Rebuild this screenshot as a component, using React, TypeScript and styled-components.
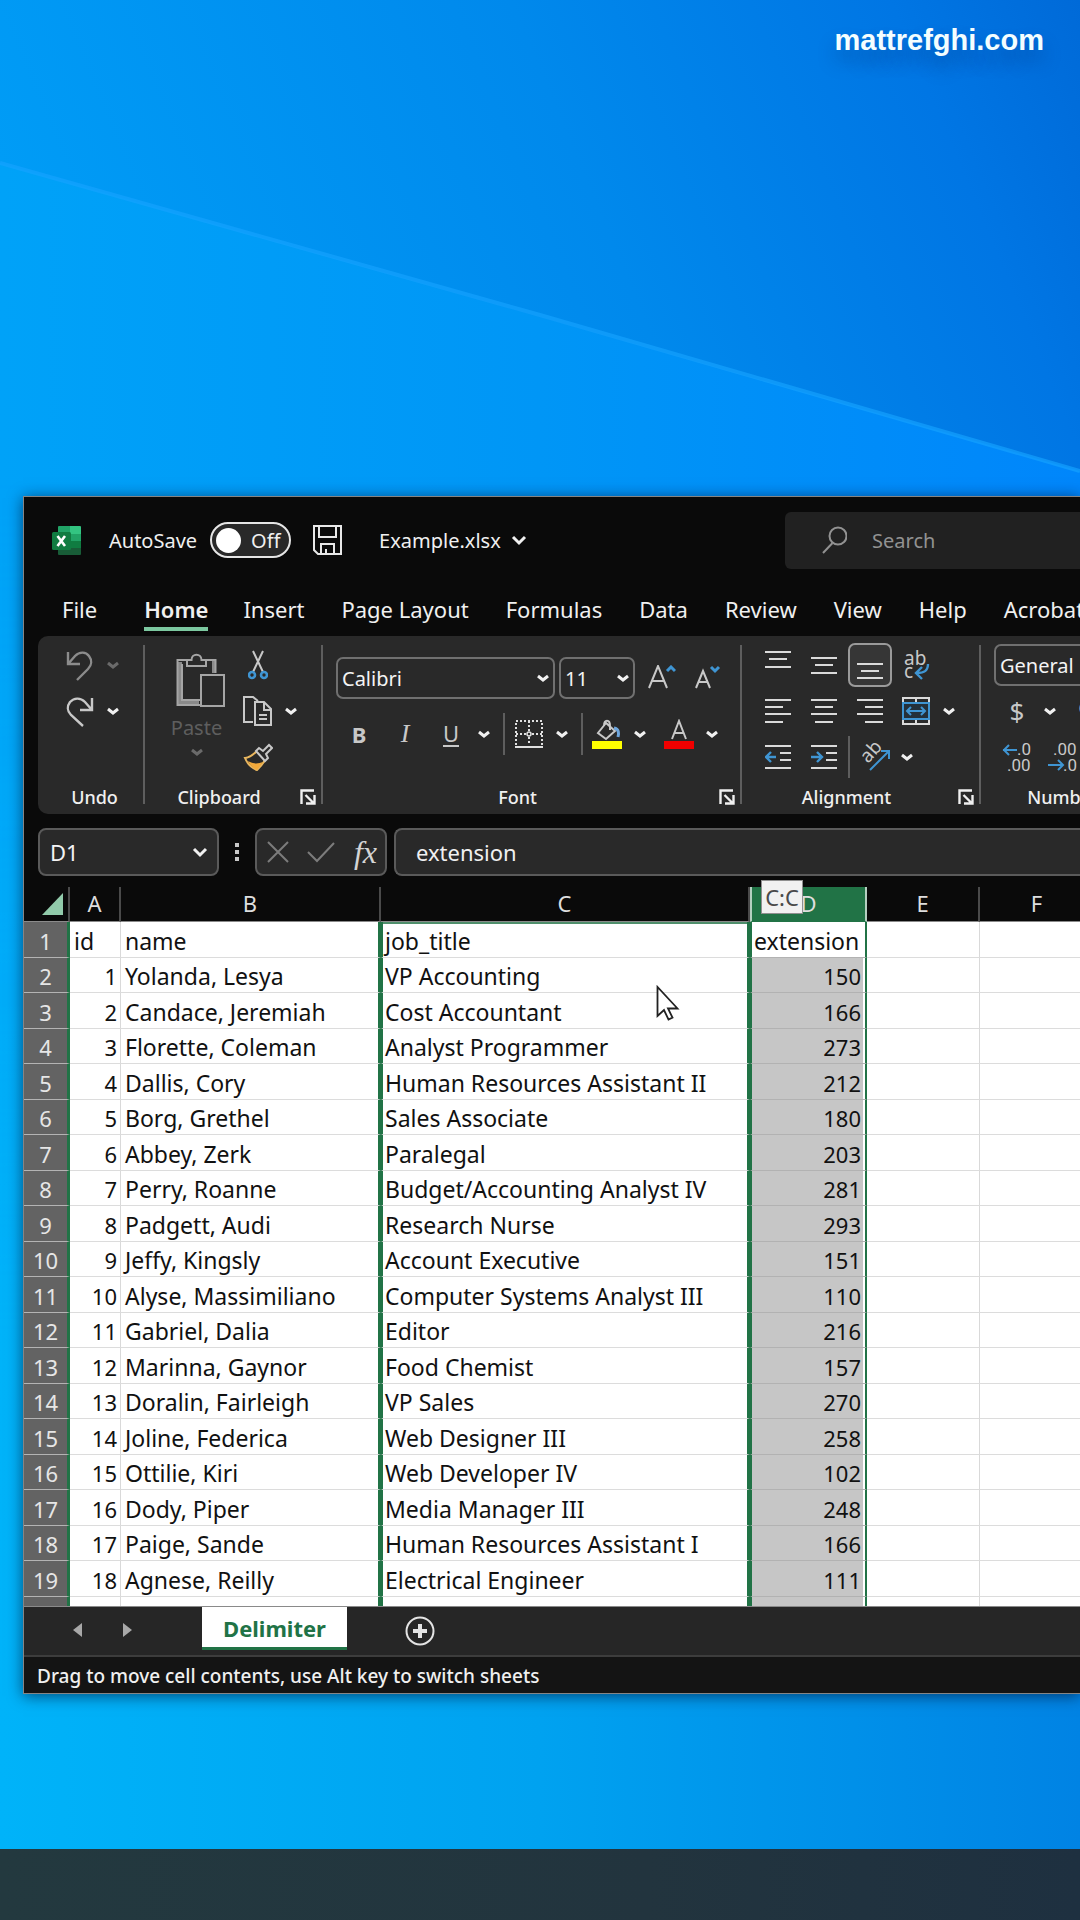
import React from "react";
import styled, { createGlobalStyle, css } from "styled-components";

const ui = `"Noto Sans", "Open Sans", sans-serif`;
const c = {
  chrome: "#0a0a0a",
  panel: "#292929",
  line: "#5e5e5e",
  icon: "#c8c8c8",
  dim: "#6a6a6a",
  blue: "#3f95d3",
  green: "#217346",
  mint: "#7cc8a0",
};

const GlobalStyle = createGlobalStyle`
  * { box-sizing: border-box; }
  html, body { margin: 0; padding: 0; }
  body { background: #0090f0; font-family: ${ui}; }
  button, input, select { font: inherit; color: inherit; border: 0; background: none; margin: 0; padding: 0; outline: none; }
  svg { display: block; flex: none; }
`;

/* ---------- desktop ---------- */

const Desktop = styled.main`
  position: relative;
  display: flex;
  flex-direction: column;
  height: 100vh;
  min-width: 0;
  overflow: hidden;
`;
const Wallpaper = styled.svg`
  position: absolute;
  inset: 0;
  width: 100%;
  height: 100%;
`;
const TopArea = styled.header`
  position: relative;
  display: flex;
  justify-content: flex-end;
  height: 496px;
  padding: 22px 36px;
`;
const SiteLink = styled.a`
  height: 36px;
  font: bold 29px/36px "Liberation Sans", Arial, sans-serif;
  color: #f4feff;
  text-decoration: none;
  text-shadow: 0 12px 18px rgba(0, 40, 100, 0.35);
`;
const Taskbar = styled.footer`
  position: relative;
  height: 71px;
  margin-top: 155px;
  background: linear-gradient(90deg, #23393f, #22343e 60%, #1e3040);
`;

/* ---------- window ---------- */

const Window = styled.section`
  position: relative;
  flex: 1;
  min-height: 0;
  display: flex;
  flex-direction: column;
  margin-left: 23px;
  border: 1px solid #858585;
  border-right: 0;
  background: ${c.chrome};
  color: #f0f0f0;
  overflow: hidden;
  box-shadow: 0 2px 14px rgba(0, 20, 50, 0.65);
`;
const TitleBar = styled.div`
  display: flex;
  align-items: center;
  height: 86px;
  padding-left: 28px;
  font-size: 20px;
  flex: none;
`;
const AutoSave = styled.label`
  display: flex;
  align-items: center;
  gap: 13px;
  margin: 0 22px 0 28px;
  white-space: nowrap;
`;
const Toggle = styled.span`
  display: flex;
  align-items: center;
  gap: 10px;
  width: 81px;
  height: 36px;
  padding-left: 4px;
  border: 2px solid #e6e6e6;
  border-radius: 18px;
  background: ${c.panel};
`;
const Switch = styled.input`
  appearance: none;
  width: 25px;
  height: 25px;
  border-radius: 50%;
  background: #fff !important;
`;
const PlainButton = styled.button`
  display: flex;
  align-items: center;
  justify-content: center;
`;
const FileButton = styled(PlainButton)`
  flex: 0 0 443px;
  justify-content: flex-start;
  gap: 10px;
  padding-left: 37px;
`;
const SearchBox = styled.label`
  flex: 1;
  min-width: 0;
  display: flex;
  align-items: center;
  gap: 25px;
  height: 57px;
  padding-left: 37px;
  border-radius: 6px 0 0 6px;
  background: #212121;
`;
const SearchInput = styled.input`
  flex: 1;
  min-width: 0;
  &::placeholder { color: #929292; opacity: 1; }
`;

const Tabs = styled.nav`
  display: flex;
  flex: none;
  height: 53px;
  gap: 37px;
  padding: 9px 0 5px 38px;
  font-size: 22px;
  overflow: hidden;
`;
const Tab = styled.button<{ $active?: boolean }>`
  height: 39px;
  line-height: 32px;
  padding-bottom: 2px;
  white-space: nowrap;
  flex: none;
  border-bottom: 4px solid transparent;
  ${(p) => p.$active && css`
    font-weight: 600;
    margin: 0 -2px 0 10px;
    border-bottom-color: ${c.mint};
  `}
`;

/* ---------- ribbon ---------- */

const Ribbon = styled.div`
  display: flex;
  flex: none;
  height: 178px;
  margin-left: 14px;
  padding-left: 6px;
  border-radius: 10px 0 0 10px;
  background: ${c.panel};
  overflow: hidden;
`;
const Group = styled.section<{ $w: number }>`
  position: relative;
  flex: 0 0 ${(p) => p.$w}px;
  display: flex;
  flex-direction: column;
  padding-top: 6px;
  background: linear-gradient(${c.line}, ${c.line}) right 9px / 2px 159px no-repeat;
`;
const GroupBody = styled.div`
  height: 138px;
  display: flex;
  padding-left: 13px;
`;
const GroupFooter = styled.div`
  display: flex;
  align-items: center;
  height: 34px;
`;
const GroupLabel = styled.span`
  flex: 1;
  text-align: center;
  font-size: 18px;
  font-weight: 500;
`;
const Launcher = styled(PlainButton)`
  width: 30px;
  height: 30px;
`;
const Rows = styled.div<{ $gap?: number; $top?: number }>`
  display: flex;
  flex-direction: column;
  gap: ${(p) => p.$gap ?? 0}px;
  padding-top: ${(p) => p.$top ?? 0}px;
`;
const Row = styled.div`
  display: flex;
  align-items: center;
  min-height: 46px;
`;
const Tool = styled(PlainButton)`
  width: 46px;
  height: 46px;
`;
const PressedFrame = styled.span`
  display: flex;
  align-items: center;
  justify-content: center;
  width: 44px;
  height: 44px;
  border: 2px solid #9a9a9a;
  border-radius: 7px;
  background: #363636;
`;
const Drop = styled(PlainButton)`
  width: 20px;
  height: 42px;
`;
const PasteButton = styled.button`
  display: flex;
  flex-direction: column;
  align-items: center;
  width: 77px;
  padding-top: 10px;
  gap: 6px;
  font-size: 20px;
  line-height: 28px;
  color: #5e5e5e;
`;
const Rule = styled.span<{ $tight?: boolean }>`
  width: ${(p) => (p.$tight ? 4 : 12)}px;
  height: 42px;
  background: linear-gradient(${c.line}, ${c.line}) ${(p) => (p.$tight ? 1 : 9)}px 0 / 2px 42px no-repeat;
`;
const Spacer = styled.span`
  width: 6px;
`;
const SelectWrap = styled.span<{ $w: number }>`
  display: grid;
  align-items: center;
  width: ${(p) => p.$w}px;
  height: 42px;
  margin-right: 4px;
  border: 2px solid #707070;
  border-radius: 7px;
  & > * { grid-area: 1 / 1; }
  & > svg { justify-self: end; margin-right: 4px; pointer-events: none; }
`;
const Select = styled.select`
  appearance: none;
  width: 100%;
  height: 100%;
  padding-left: 4px;
  font-size: 20px;
  color: #f4f4f4;
`;
const Letter = styled.span<{ $size?: number; $bold?: boolean; $italic?: boolean; $under?: boolean }>`
  font-size: ${(p) => p.$size ?? 22}px;
  line-height: 26px;
  color: ${c.icon};
  font-weight: ${(p) => (p.$bold ? 700 : 400)};
  ${(p) => p.$italic && css`font-family: "Liberation Serif", serif; font-style: italic; font-size: 26px;`}
  ${(p) => p.$under && css`border-bottom: 2px solid ${c.icon}; line-height: 24px;`}
`;

/* ---------- formula bar ---------- */

const FormulaBar = styled.div`
  display: flex;
  align-items: center;
  flex: none;
  height: 48px;
  margin: 14px 0 0 14px;
  font-size: 22px;
`;
const NameBox = styled(SelectWrap)`
  height: 48px;
  margin: 0;
  background: ${c.panel};
  border-color: #5a5a5a;
  border-radius: 8px;
  & > select { font-size: 22px; padding-left: 10px; }
  & > svg { margin-right: 9px; }
`;
const Dots = styled.span`
  width: 36px;
  display: flex;
  justify-content: center;
`;
const FxGroup = styled.div`
  display: flex;
  align-items: center;
  justify-content: space-between;
  width: 132px;
  height: 48px;
  padding: 0 8px 0 10px;
  border: 2px solid #5a5a5a;
  border-radius: 8px;
  background: ${c.panel};
`;
const Fx = styled.span`
  font: italic 32px/36px "Liberation Serif", serif;
  color: #d4d4d4;
`;
const FormulaInput = styled.input`
  flex: 1;
  min-width: 0;
  height: 48px;
  margin-left: 7px !important;
  padding-left: 20px !important;
  border: 2px solid #5a5a5a !important;
  border-right: 0 !important;
  border-radius: 8px 0 0 8px;
  background: ${c.panel} !important;
  color: #f0f0f0;
`;

/* ---------- sheet ---------- */

const Sheet = styled.div`
  position: relative;
  flex: 1;
  min-height: 0;
  padding-top: 11px;
  overflow: hidden;
`;
const Grid = styled.table`
  table-layout: fixed;
  width: 1071px;
  border-collapse: separate;
  border-spacing: 0;
  font-size: 23px;
  line-height: 30px;
  color: #111;
`;
const Col = styled.col<{ $w: number }>`
  width: ${(p) => p.$w}px;
`;
const HeadRow = styled.tr`
  height: 35px;
`;
const ColHead = styled.th<{ $selected?: boolean }>`
  position: relative;
  padding: 0 0 2px;
  font-size: 22px;
  line-height: 30px;
  font-weight: 400;
  color: #dedede;
  border-right: 2px solid #4a4a4a;
  border-bottom: 1px solid #8a8a8a;
  ${(p) => p.$selected && css`
    background: ${c.green};
    border-left: 2px solid #b4cfc0;
    border-right: 2px solid #b4cfc0;
    border-bottom-color: ${c.green};
  `}
`;
const Corner = styled.th`
  padding: 0 5px 0 0;
  border-right: 2px solid #4a4a4a;
  border-bottom: 1px solid #8a8a8a;
  & > svg { margin-left: auto; }
`;
const BodyRow = styled.tr`
  height: 36px;
  &:nth-child(even) { height: 35px; }
`;
const RowHead = styled.th`
  padding: 2px 0 0;
  font-size: 22px;
  font-weight: 400;
  color: #e6e6e6;
  background: #636363;
  border-right: 3px solid ${c.green};
  border-bottom: 1px solid #b4b4b4;
`;
const Cell = styled.td<{ $col: string; $num?: boolean }>`
  padding: 2px 3px 0 4px;
  white-space: nowrap;
  background: #fff;
  border-right: 1px solid #d9d9d9;
  border-bottom: 1px solid #dcdcdc;
  text-align: ${(p) => (p.$num ? "right" : "left")};
  ${(p) => p.$num && css`font-size: 22px;`}
  ${(p) => p.$col === "B" && css`border-right: 3px solid ${c.green};`}
  ${(p) => p.$col === "C" && css`
    padding-left: 2px;
    border-left: 2px solid ${c.green};
    border-right: 3px solid ${c.green};
    tr:first-child > & { box-shadow: inset 0 2px 0 #4f8f6c; }
  `}
  ${(p) => p.$col === "D" && css`
    padding: 2px 4px 0 2px;
    border-left: 2px solid ${c.green};
    border-right: 2px solid ${c.green};
    border-bottom-color: #b2b2b2;
    background: #c6c6c6;
    box-shadow: inset -2px 0 0 #fff;
    tr:first-child > & { background: #fff; }
  `}
`;
const DragTip = styled.span`
  position: absolute;
  left: 9px;
  top: -7px;
  width: 42px;
  height: 34px;
  border: 1px solid #8f8f8f;
  background: #f1f1f1;
  color: #4a4a4a;
  font-size: 22px;
  line-height: 32px;
  text-align: center;
  z-index: 1;
`;
const Pointer = styled.svg`
  position: absolute;
  left: 632px;
  top: 109px;
`;

/* ---------- footer bars ---------- */

const SheetBar = styled.div`
  display: flex;
  flex: none;
  height: 51px;
  border-top: 1px solid #8a8a8a;
  border-bottom: 2px solid #3d3d3d;
  background: #262626;
`;
const SheetNav = styled.div`
  display: flex;
  width: 178px;
  height: 46px;
  padding-left: 28px;
`;
const NavButton = styled(PlainButton)`
  width: 50px;
  height: 46px;
`;
const SheetTab = styled.button`
  width: 145px;
  height: 43px;
  background: #fff;
  border-bottom: 3px solid ${c.green};
  color: ${c.green};
  font-size: 22px;
  line-height: 42px;
  font-weight: 700;
`;
const AddSheet = styled(PlainButton)`
  width: 146px;
  height: 48px;
`;
const StatusBar = styled.div`
  flex: none;
  height: 36px;
  padding-left: 13px;
  background: #141414;
  font-size: 19px;
  font-weight: 500;
  line-height: 38px;
  white-space: nowrap;
`;

/* ---------- icons ---------- */

type IconProps = { w: number; h: number; children: React.ReactNode; sw?: number; color?: string };
const Icon = ({ w, h, children, sw = 2, color = c.icon }: IconProps) => (
  <svg width={w} height={h} viewBox={`0 0 ${w} ${h}`} fill="none" stroke={color} strokeWidth={sw} aria-hidden="true">
    {children}
  </svg>
);
const Chevron = ({ big, dim }: { big?: boolean; dim?: boolean }) =>
  big ? (
    <Icon w={16} h={12} sw={3} color="#f0f0f0"><path d="M2 3l6 6 6-6" /></Icon>
  ) : (
    <Icon w={12} h={8} sw={3} color={dim ? c.dim : "#f0f0f0"}><path d="M1 2l5 4 5-4" /></Icon>
  );
const ExcelLogo = () => (
  <svg width="29" height="30" viewBox="0 0 29 30" aria-hidden="true">
    <path d="M6 2a1 1 0 0 1 1-1h11v8H6z" fill="#21a366" />
    <path d="M18 1h10a1 1 0 0 1 1 1v7H18z" fill="#33c481" />
    <path d="M6 9h12v7H6z" fill="#107c41" />
    <path d="M18 9h11v7H18z" fill="#21a366" />
    <path d="M6 16h12v7H6z" fill="#185c37" />
    <path d="M18 16h11v7H18z" fill="#107c41" />
    <path d="M6 23h23v6a1 1 0 0 1-1 1H7a1 1 0 0 1-1-1z" fill="#185c37" />
    <rect x="0" y="7" width="19" height="18" rx="1.500" fill="#107c41" />
    <path d="M5.500 11l7.500 10M13 11L5.500 21" stroke="#fff" strokeWidth="2.600" />
  </svg>
);
const SaveIcon = () => (
  <Icon w={29} h={30} color="#e8e8e8">
    <path d="M1 1h27v28H5l-4-4z" />
    <path d="M6 1v11h17V1M8 29V19h13v10M13 29v-5" />
  </Icon>
);
const SearchIcon = () => (
  <Icon w={25} h={28} color="#929292"><circle cx="16" cy="10" r="8.500" /><path d="M10.500 17L1 27" /></Icon>
);
const UndoIcon = () => (
  <Icon w={28} h={31} sw={2.4} color="#8c8c8c"><path d="M2 2v12h12M2.500 13.500L9 6c5-5 11-4 14 0 3 4 3 9-1 13L11 30" /></Icon>
);
const RedoIcon = () => (
  <Icon w={28} h={31} sw={2.4}><path d="M26 2v12H14M25.500 13.500L19 6C14 1 8 2 4 6c-3 4-3 9 1 13l12 11" /></Icon>
);
const PasteIcon = () => (
  <Icon w={56} h={56} color="#a5a5a5">
    <g transform="translate(7 1)">
      <path d="M4 9v42M1 49h22M38 7v13" stroke="#8a8a8a" strokeWidth="4" />
      <path d="M11 7H1.500v45H24M30 7h9.500v13M6 11v36h18" />
      <path d="M11 13V7h4.500c0-7 10-7 10 0H30v6z" fill={c.panel} />
      <path d="M25 22h23v31H25z" fill={c.panel} />
    </g>
  </Icon>
);
const CutIcon = () => (
  <Icon w={20} h={32}>
    <path d="M5 2l10 21M15 2L5 23" />
    <circle cx="4" cy="26" r="3" stroke={c.blue} strokeWidth="2.600" />
    <circle cx="16" cy="26" r="3" stroke={c.blue} strokeWidth="2.600" />
  </Icon>
);
const CopyIcon = () => (
  <Icon w={30} h={30}>
    <path d="M10 26H1V1h9l5 4" />
    <path d="M12 6h9l7 7v16H12zM21 6v8h7M16 19h8M16 23h8" />
  </Icon>
);
const BrushIcon = () => (
  <Icon w={30} h={28}>
    <path d="M2 15C7 15 11 11 14 8l8 9c-2 4-5 7-8 10C9 25 4 20 2 15z" stroke="#e8b65e" />
    <path d="M5 18c5 3 10 3 15 1l-6 8C10 25 7 22 5 18z" fill="#f2a93b" stroke="none" />
    <path d="M13 8l3-3 4 3 6-6 3 3-6 6 2 4-3 3z" fill={c.panel} />
  </Icon>
);
const LaunchIcon = () => (
  <Icon w={16} h={16} sw={2.4} color="#f0f0f0"><path d="M1.500 15V1.500H14M5.500 6l8 8M14.500 6v8.500H6" /></Icon>
);
const GrowIcon = ({ down }: { down?: boolean }) => (
  <Icon w={28} h={26}>
    {down ? <path d="M2 23L9 6l7 17M4.500 17h9" /> : <path d="M1 23L10 1l9 22M4.500 16h11" />}
    {down ? <path d="M17 2l4 4 4-4" stroke={c.blue} strokeWidth="3" /> : <path d="M19 6l4-4 4 4" stroke={c.blue} strokeWidth="3" />}
  </Icon>
);
const BorderIcon = () => (
  <Icon w={28} h={28} color="#e0e0e0">
    <path d="M1 1h27M14 1v24M1 14h26M1 3v22M27 3v22" strokeDasharray="2 2" />
    <circle cx="14" cy="14" r="2" fill={c.panel} strokeWidth="1.500" />
    <path d="M0 27h28" />
  </Icon>
);
const FillIcon = () => (
  <Icon w={30} h={30}>
    <path d="M14 4L6 14l8 6 9-8zM12 7c0-7 6-7 6 0v4" />
    <path d="M22 9c5 1 5 5 4 9" stroke="#6ea6dd" strokeWidth="3" />
    <path d="M0 22h30v8H0z" fill="#ffff00" stroke="none" />
  </Icon>
);
const FontColorIcon = () => (
  <Icon w={30} h={30}>
    <path d="M8 20L15 2l7 18M10.500 14h9" />
    <path d="M0 22h30v8H0z" fill="#f00000" stroke="none" />
  </Icon>
);
const LinesIcon = ({ rows, h = 26 }: { rows: [number, number, number][]; h?: number }) => (
  <Icon w={26} h={h} color="#dadada">
    {rows.map(([x1, x2, y]) => <path key={y} d={`M${x1} ${y}H${x2}`} />)}
  </Icon>
);
const IndentIcon = ({ out }: { out?: boolean }) => (
  <Icon w={26} h={26} color="#dadada">
    <path d="M0 2h26M15 9h11M15 16h11M0 24h26" />
    {out ? <path d="M11 13H2M6 8l-5 5 5 5" stroke={c.blue} strokeWidth="2.400" /> : <path d="M0 13h10M6 8l5 5-5 5" stroke={c.blue} strokeWidth="2.400" />}
  </Icon>
);
const IconText = styled.text`
  font-family: ${ui};
  font-size: 19px;
  fill: ${c.icon};
  stroke: none;
`;
const IconDigits = styled(IconText)`
  font-family: Roboto, sans-serif;
  font-size: 17px;
`;
const WrapIcon = () => (
  <Icon w={30} h={34}>
    <IconText x="3" y="17">ab</IconText>
    <IconText x="3" y="30">c</IconText>
    <path d="M27 16c0 7-4 9-11 9M21 19l-6 6 6 6" stroke={c.blue} strokeWidth="2.400" />
  </Icon>
);
const MergeIcon = () => (
  <Icon w={28} h={28} color="#dadada">
    <path d="M1 1h26v26H1zM14 1v5M14 22v5" />
    <path d="M1 6h26v16H1z" stroke={c.blue} fill="#24303a" />
    <path d="M5 14h18M9 10l-4 4 4 4M19 10l4 4-4 4" stroke={c.blue} />
  </Icon>
);
const RotateIcon = () => (
  <Icon w={32} h={30}>
    <IconText x="0" y="0" transform="translate(10 22) rotate(-48)">ab</IconText>
    <path d="M12 28L31 9M23 9h8v8" stroke={c.blue} />
  </Icon>
);
const DecimalIcon = ({ less }: { less?: boolean }) => (
  <Icon w={30} h={34}>
    <IconDigits x={less ? 5 : 15} y="15">{less ? ".00" : ".0"}</IconDigits>
    <IconDigits x={less ? 15 : 5} y="31">{less ? ".0" : ".00"}</IconDigits>
    {less ? <path d="M0 25h15M10 20l5 5-5 5" stroke={c.blue} /> : <path d="M15 10H1M7 5l-5 5 5 5" stroke={c.blue} />}
  </Icon>
);

/* ---------- data ---------- */

const tabs = ["File", "Home", "Insert", "Page Layout", "Formulas", "Data", "Review", "View", "Help", "Acrobat"];
const records: [string, string, string][] = [
  ["Yolanda, Lesya", "VP Accounting", "150"],
  ["Candace, Jeremiah", "Cost Accountant", "166"],
  ["Florette, Coleman", "Analyst Programmer", "273"],
  ["Dallis, Cory", "Human Resources Assistant II", "212"],
  ["Borg, Grethel", "Sales Associate", "180"],
  ["Abbey, Zerk", "Paralegal", "203"],
  ["Perry, Roanne", "Budget/Accounting Analyst IV", "281"],
  ["Padgett, Audi", "Research Nurse", "293"],
  ["Jeffy, Kingsly", "Account Executive", "151"],
  ["Alyse, Massimiliano", "Computer Systems Analyst III", "110"],
  ["Gabriel, Dalia", "Editor", "216"],
  ["Marinna, Gaynor", "Food Chemist", "157"],
  ["Doralin, Fairleigh", "VP Sales", "270"],
  ["Joline, Federica", "Web Designer III", "258"],
  ["Ottilie, Kiri", "Web Developer IV", "102"],
  ["Dody, Piper", "Media Manager III", "248"],
  ["Paige, Sande", "Human Resources Assistant I", "166"],
  ["Agnese, Reilly", "Electrical Engineer", "111"],
];

const Footer = ({ label, launch = true }: { label: string; launch?: boolean }) => (
  <GroupFooter>
    <GroupLabel>{label}</GroupLabel>
    {launch && <Launcher aria-label={`${label} settings`}><LaunchIcon /></Launcher>}
  </GroupFooter>
);

const Background = () => (
  <Wallpaper viewBox="0 0 1080 1920" preserveAspectRatio="none" aria-hidden="true">
    <defs>
      <linearGradient id="sky" gradientUnits="userSpaceOnUse" x1="0" y1="450" x2="1080" y2="0">
        <stop offset="0" stopColor="#00a0f8" />
        <stop offset="0.550" stopColor="#0089ec" />
        <stop offset="0.850" stopColor="#0076e4" />
        <stop offset="1" stopColor="#006ad8" />
      </linearGradient>
      <linearGradient id="ground" x1="0" y1="0" x2="1" y2="0">
        <stop offset="0" stopColor="#00a2f8" />
        <stop offset="0.500" stopColor="#0096f6" />
        <stop offset="1" stopColor="#0086fb" />
      </linearGradient>
      <linearGradient id="floor" x1="0" y1="0" x2="1" y2="0">
        <stop offset="0" stopColor="#00b3f9" />
        <stop offset="0.500" stopColor="#00a2f0" />
        <stop offset="1" stopColor="#0083e4" />
      </linearGradient>
      <linearGradient id="fade" x1="0" y1="0" x2="0" y2="1">
        <stop offset="0.250" stopColor="#fff" stopOpacity="0" />
        <stop offset="0.700" stopColor="#fff" />
      </linearGradient>
      <mask id="low"><rect width="1080" height="1920" fill="url(#fade)" /></mask>
    </defs>
    <rect width="1080" height="1920" fill="url(#sky)" />
    <path d="M0 163L1080 471V1920H0z" fill="url(#ground)" />
    <rect width="1080" height="1920" fill="url(#floor)" mask="url(#low)" />
    <path d="M0 163L540 315L1080 471" stroke="#16a3ff" strokeWidth="4" fill="none" opacity="0.650" />
  </Wallpaper>
);

export default function App() {
  return (
    <Desktop>
      <GlobalStyle />
      <Background />
      <TopArea><SiteLink href="#">mattrefghi.com</SiteLink></TopArea>

      <Window aria-label="Spreadsheet">
        <TitleBar>
          <ExcelLogo />
          <AutoSave>
            AutoSave
            <Toggle><Switch type="checkbox" />Off</Toggle>
          </AutoSave>
          <PlainButton aria-label="Save"><SaveIcon /></PlainButton>
          <FileButton>Example.xlsx <Chevron big /></FileButton>
          <SearchBox><SearchIcon /><SearchInput aria-label="Search" placeholder="Search" /></SearchBox>
        </TitleBar>

        <Tabs>{tabs.map((t) => <Tab key={t} $active={t === "Home"}>{t}</Tab>)}</Tabs>

        <Ribbon>
          <Group $w={101}>
            <GroupBody>
              <Rows>
                <Row><Tool aria-label="Undo"><UndoIcon /></Tool><Drop aria-label="Undo list"><Chevron dim /></Drop></Row>
                <Row><Tool aria-label="Redo"><RedoIcon /></Tool><Drop aria-label="Redo list"><Chevron /></Drop></Row>
              </Rows>
            </GroupBody>
            <Footer label="Undo" launch={false} />
          </Group>

          <Group $w={178}>
            <GroupBody>
              <PasteButton><PasteIcon />Paste<Chevron dim /></PasteButton>
              <Rows>
                <Row><Tool aria-label="Cut"><CutIcon /></Tool></Row>
                <Row><Tool aria-label="Copy"><CopyIcon /></Tool><Drop aria-label="Copy options"><Chevron /></Drop></Row>
                <Row><Tool aria-label="Format painter"><BrushIcon /></Tool></Row>
              </Rows>
            </GroupBody>
            <Footer label="Clipboard" />
          </Group>

          <Group $w={419}>
            <GroupBody>
              <Rows $gap={10} $top={13}>
                <Row>
                  <SelectWrap $w={219}><Select aria-label="Font"><option>Calibri</option></Select><Chevron /></SelectWrap>
                  <SelectWrap $w={76}><Select aria-label="Font size"><option>11</option></Select><Chevron /></SelectWrap>
                  <Tool aria-label="Increase font size"><GrowIcon /></Tool>
                  <Tool aria-label="Decrease font size"><GrowIcon down /></Tool>
                </Row>
                <Row>
                  <Tool><Letter $bold>B</Letter></Tool>
                  <Tool><Letter $italic>I</Letter></Tool>
                  <Tool><Letter $under>U</Letter></Tool>
                  <Drop aria-label="Underline options"><Chevron /></Drop>
                  <Rule />
                  <Tool aria-label="Borders"><BorderIcon /></Tool>
                  <Drop aria-label="Border options"><Chevron /></Drop>
                  <Rule />
                  <Tool aria-label="Fill colour"><FillIcon /></Tool>
                  <Drop aria-label="Fill options"><Chevron /></Drop>
                  <Spacer />
                  <Tool aria-label="Font colour"><FontColorIcon /></Tool>
                  <Drop aria-label="Font colour options"><Chevron /></Drop>
                </Row>
              </Rows>
            </GroupBody>
            <Footer label="Font" />
          </Group>

          <Group $w={239}>
            <GroupBody>
              <Rows>
                <Row>
                  <Tool aria-label="Top align"><LinesIcon h={30} rows={[[0, 26, 2], [4, 22, 9], [0, 26, 17]]} /></Tool>
                  <Tool aria-label="Middle align"><LinesIcon h={30} rows={[[0, 26, 8], [4, 22, 15], [0, 26, 23]]} /></Tool>
                  <Tool aria-label="Bottom align" aria-pressed="true"><PressedFrame><LinesIcon h={32} rows={[[0, 26, 15], [4, 22, 22], [0, 26, 29]]} /></PressedFrame></Tool>
                  <Tool aria-label="Wrap text"><WrapIcon /></Tool>
                </Row>
                <Row>
                  <Tool aria-label="Align left"><LinesIcon rows={[[0, 26, 2], [0, 18, 9], [0, 26, 16], [0, 18, 24]]} /></Tool>
                  <Tool aria-label="Centre"><LinesIcon rows={[[0, 26, 2], [4, 22, 9], [0, 26, 16], [4, 22, 24]]} /></Tool>
                  <Tool aria-label="Align right"><LinesIcon rows={[[0, 26, 2], [8, 26, 9], [0, 26, 16], [8, 26, 24]]} /></Tool>
                  <Tool aria-label="Merge cells"><MergeIcon /></Tool>
                  <Drop aria-label="Merge options"><Chevron /></Drop>
                </Row>
                <Row>
                  <Tool aria-label="Decrease indent"><IndentIcon out /></Tool>
                  <Tool aria-label="Increase indent"><IndentIcon /></Tool>
                  <Rule $tight />
                  <Tool aria-label="Orientation"><RotateIcon /></Tool>
                  <Drop aria-label="Orientation options"><Chevron /></Drop>
                </Row>
              </Rows>
            </GroupBody>
            <Footer label="Alignment" />
          </Group>

          <Group $w={194}>
            <GroupBody>
              <Rows>
                <Row>
                  <SelectWrap $w={170}><Select aria-label="Number format"><option>General</option></Select><Chevron /></SelectWrap>
                </Row>
                <Row>
                  <Tool><Letter $size={26}>$</Letter></Tool>
                  <Drop aria-label="Currency options"><Chevron /></Drop>
                  <Spacer />
                  <Tool><Letter $size={26}>%</Letter></Tool>
                </Row>
                <Row>
                  <Tool aria-label="Increase decimal"><DecimalIcon /></Tool>
                  <Tool aria-label="Decrease decimal"><DecimalIcon less /></Tool>
                </Row>
              </Rows>
            </GroupBody>
            <Footer label="Number" />
          </Group>
        </Ribbon>

        <FormulaBar>
          <NameBox $w={181}><Select aria-label="Name box"><option>D1</option></Select><Chevron big /></NameBox>
          <Dots><Icon w={4} h={18}><path d="M2 0v18" strokeWidth="4" strokeDasharray="4 3" /></Icon></Dots>
          <FxGroup>
            <PlainButton aria-label="Cancel"><Icon w={22} h={22} color="#7c7c7c"><path d="M1 1l20 20M21 1L1 21" /></Icon></PlainButton>
            <PlainButton aria-label="Enter"><Icon w={28} h={22} color="#7c7c7c"><path d="M1 11l9 9L27 2" /></Icon></PlainButton>
            <PlainButton aria-label="Insert function"><Fx>fx</Fx></PlainButton>
          </FxGroup>
          <FormulaInput aria-label="Formula" defaultValue="extension" />
        </FormulaBar>

        <Sheet>
          <Grid>
            <colgroup>
              {[46, 51, 260, 369, 117, 113, 115].map((w, i) => <Col key={i} $w={w} />)}
            </colgroup>
            <thead>
              <HeadRow>
                <Corner aria-label="Select all"><svg width="21" height="22" viewBox="0 0 21 22"><path d="M21 0v22H0z" fill="#92cbab" /></svg></Corner>
                {["A", "B", "C", "D", "E", "F"].map((h) => (
                  <ColHead key={h} scope="col" $selected={h === "D"}>{h}{h === "D" && <DragTip role="tooltip">C:C</DragTip>}</ColHead>
                ))}
              </HeadRow>
            </thead>
            <tbody>
              <BodyRow>
                <RowHead scope="row">1</RowHead>
                <Cell $col="A">id</Cell><Cell $col="B">name</Cell><Cell $col="C">job_title</Cell><Cell $col="D">extension</Cell><Cell $col="E" /><Cell $col="F" />
              </BodyRow>
              {records.map(([name, job, ext], i) => (
                <BodyRow key={i}>
                  <RowHead scope="row">{i + 2}</RowHead>
                  <Cell $col="A" $num>{i + 1}</Cell>
                  <Cell $col="B">{name}</Cell>
                  <Cell $col="C">{job}</Cell>
                  <Cell $col="D" $num>{ext}</Cell>
                  <Cell $col="E" /><Cell $col="F" />
                </BodyRow>
              ))}
              <BodyRow>
                <RowHead scope="row" aria-label="20" />
                {["A", "B", "C", "D", "E", "F"].map((k) => <Cell key={k} $col={k} />)}
              </BodyRow>
            </tbody>
          </Grid>
          <Pointer width="24" height="36" viewBox="0 0 24 36" aria-hidden="true">
            <path d="M1.500 2v29l6.500-6 4.500 9.500 4-2-4.500-9h9.500z" fill="#fff" stroke="#222" strokeWidth="1.800" />
          </Pointer>
        </Sheet>

        <SheetBar>
          <SheetNav>
            <NavButton aria-label="Previous sheet"><svg width="9" height="14"><path d="M9 0v14L0 7z" fill="#a8a8a8" /></svg></NavButton>
            <NavButton aria-label="Next sheet"><svg width="9" height="14"><path d="M0 0v14l9-7z" fill="#a8a8a8" /></svg></NavButton>
          </SheetNav>
          <SheetTab>Delimiter</SheetTab>
          <AddSheet aria-label="New sheet">
            <Icon w={30} h={30} color="#e4e4e4"><circle cx="15" cy="15" r="13.500" /><path d="M15 8v14M8 15h14" strokeWidth="4" /></Icon>
          </AddSheet>
        </SheetBar>
        <StatusBar>Drag to move cell contents, use Alt key to switch sheets</StatusBar>
      </Window>

      <Taskbar />
    </Desktop>
  );
}
